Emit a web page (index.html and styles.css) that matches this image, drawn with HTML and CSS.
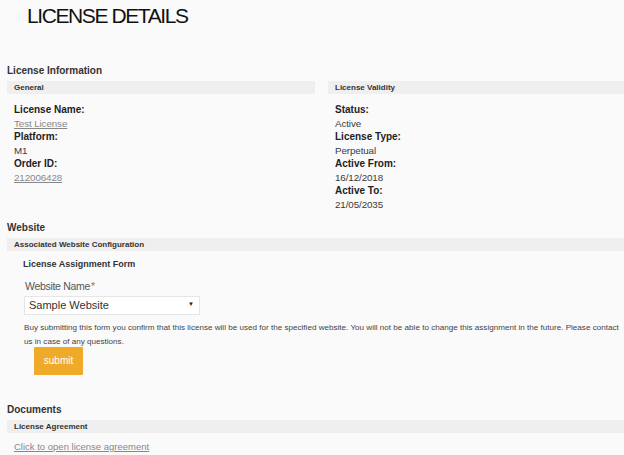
FILE: index.html
```html
<!DOCTYPE html>
<html lang="en">
<head>
  <meta charset="UTF-8" />
  <title>License Details</title>
  <link rel="stylesheet" href="styles.css">
</head>
<body>
  <h1 class="page-title">LICENSE DETAILS</h1>

  <div class="section">
    <h2 class="section-title">License Information</h2>
    <div class="columns">
      <div class="panel">
        <div class="panel-head">General</div>
        <dl class="fields">
          <dt>License Name:</dt>
          <dd><a href="#">Test License</a></dd>
          <dt>Platform:</dt>
          <dd>M1</dd>
          <dt>Order ID:</dt>
          <dd><a href="#">212006428</a></dd>
        </dl>
      </div>
      <div class="panel">
        <div class="panel-head">License Validity</div>
        <dl class="fields">
          <dt>Status:</dt>
          <dd>Active</dd>
          <dt>License Type:</dt>
          <dd>Perpetual</dd>
          <dt>Active From:</dt>
          <dd>16/12/2018</dd>
          <dt>Active To:</dt>
          <dd>21/05/2035</dd>
        </dl>
      </div>
    </div>
  </div>

  <div class="section section-website">
    <h2 class="section-title">Website</h2>
    <div class="panel-head">Associated Website Configuration</div>
    <form class="assign-form" onsubmit="return false">
      <h3 class="form-title">License Assignment Form</h3>
      <label class="field-label" for="website">Website Name<span class="required">*</span></label>
      <div class="select-box">
        <select id="website">
          <option>Sample Website</option>
        </select>
        <span class="select-arrow">&#9660;</span>
      </div>
      <p class="form-note">Buy submitting this form you confirm that this license will be used for the specified website. You will not be able to change this assignment in the future. Please contact us in case of any questions.</p>
      <button type="submit" class="btn-submit">submit</button>
    </form>
  </div>

  <div class="section section-docs">
    <h2 class="section-title">Documents</h2>
    <div class="panel-head">License Agreement</div>
    <a href="#" class="doc-link">Click to open license agreement</a>
  </div>
</body>
</html>
```

FILE: styles.css
```css
* {
  box-sizing: border-box;
}

html, body {
  margin: 0;
  padding: 0;
  background: #fafafa;
  font-family: 'Liberation Sans', Arial, sans-serif;
  color: #333;
  overflow: hidden;
}

.page-title {
  margin: 0;
  padding: 4px 0 0 27px;
  font-size: 21px;
  font-weight: normal;
  letter-spacing: -1.4px;
  color: #111;
  line-height: 24px;
}

.section {
  padding-left: 7px;
}

.section-title {
  margin: 37px 0 4px;
  font-size: 10px;
  font-weight: bold;
  color: #333;
  line-height: 12px;
}

.columns {
  display: grid;
  grid-template-columns: 308px 1fr;
  gap: 13px;
}

.panel-head {
  background: #efefef;
  font-size: 8px;
  font-weight: bold;
  color: #333;
  height: 13px;
  line-height: 13px;
  padding-left: 7px;
}

.fields {
  margin: 9px 0 0 7px;
  font-size: 10px;
  line-height: 13.5px;
}

.fields dt {
  font-weight: bold;
  color: #222;
}

.fields dd {
  margin: 0;
  font-size: 9.8px;
  letter-spacing: -0.1px;
  color: #3a3a3a;
}

.fields a,
.doc-link {
  color: #888;
  text-decoration: underline;
}

.section-website .section-title {
  margin-top: 11px;
}

.assign-form {
  padding: 0 0 0 16px;
}

.form-title {
  margin: 7px 0 0;
  font-size: 9px;
  font-weight: bold;
  color: #333;
  line-height: 12px;
}

.field-label {
  display: block;
  margin: 10px 0 3px 2px;
  font-size: 10.5px;
  letter-spacing: -0.3px;
  color: #555;
  line-height: 12px;
}

.required {
  color: #d9534f;
  margin-left: 1px;
}

.select-box {
  position: relative;
  width: 176px;
  margin-left: 1px;
}

.select-box select {
  appearance: none;
  -webkit-appearance: none;
  width: 100%;
  height: 19px;
  padding: 0 0 0 4px;
  border: 1px solid #e6e6e6;
  background: #fff;
  font-family: inherit;
  font-size: 11px;
  color: #333;
  border-radius: 0;
}

.select-arrow {
  position: absolute;
  right: 6px;
  top: 6px;
  font-size: 6px;
  color: #222;
  pointer-events: none;
}

.form-note {
  margin: 6px 0 0 1px;
  max-width: 596px;
  font-size: 8.1px;
  line-height: 14px;
  color: #444;
}

.btn-submit {
  display: block;
  margin: -2px 0 0 11px;
  width: 49px;
  height: 28px;
  background: #f0aa2a;
  border: none;
  border-radius: 1px;
  color: #fff;
  font-family: inherit;
  font-size: 10px;
  cursor: pointer;
}

.section-docs .section-title {
  margin-top: 29px;
}

.doc-link {
  display: block;
  margin: 8px 0 0 7px;
  font-size: 9.5px;
}
```
